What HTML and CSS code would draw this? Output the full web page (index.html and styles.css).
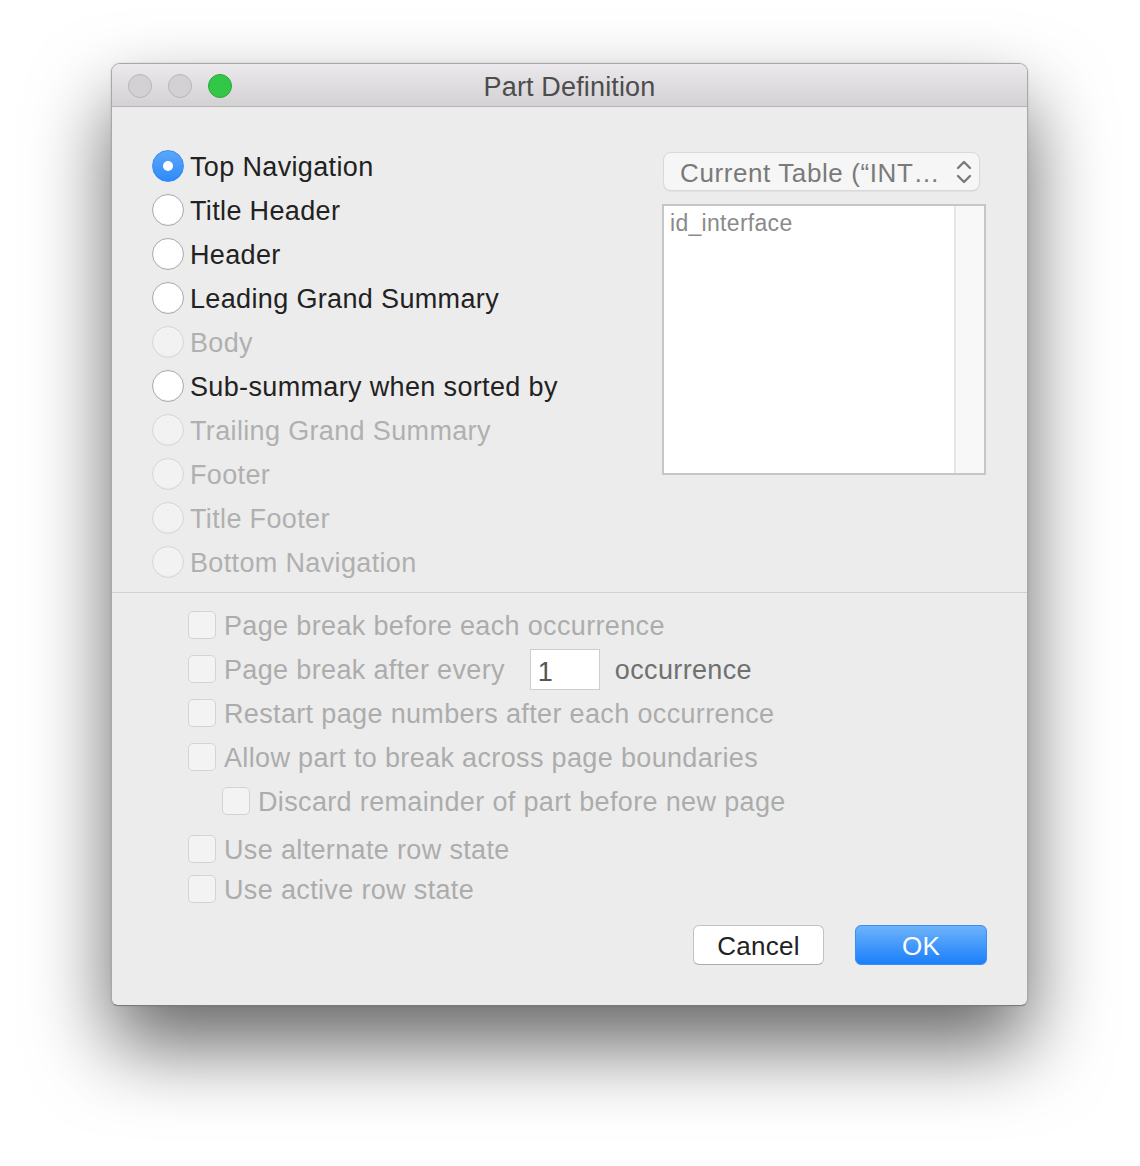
FILE: index.html
```html
<!DOCTYPE html>
<html>
<head>
<meta charset="utf-8">
<title>Part Definition</title>
<link rel="stylesheet" href="styles.css">
</head>
<body>
<div class="window">
  <div class="titlebar">
    <div class="lights">
      <span class="light"></span>
      <span class="light"></span>
      <span class="light green"></span>
    </div>
    <div class="title">Part Definition</div>
  </div>
  <div class="top">
    <ul class="radios">
      <li class="radio checked"><span class="rb"></span>Top Navigation</li>
      <li class="radio"><span class="rb"></span>Title Header</li>
      <li class="radio"><span class="rb"></span>Header</li>
      <li class="radio"><span class="rb"></span>Leading Grand Summary</li>
      <li class="radio disabled"><span class="rb"></span>Body</li>
      <li class="radio"><span class="rb"></span>Sub-summary when sorted by</li>
      <li class="radio disabled"><span class="rb"></span>Trailing Grand Summary</li>
      <li class="radio disabled"><span class="rb"></span>Footer</li>
      <li class="radio disabled"><span class="rb"></span>Title Footer</li>
      <li class="radio disabled"><span class="rb"></span>Bottom Navigation</li>
    </ul>
    <div class="side">
      <div class="popup">
        <span class="popup-text">Current Table (“INT…</span>
        <svg class="chev" width="16" height="24" viewBox="0 0 16 24"><path d="M2 8 L8 2 L14 8 M2 16 L8 22 L14 16" fill="none" stroke="#7a7a7a" stroke-width="2.4" stroke-linecap="round" stroke-linejoin="round"/></svg>
      </div>
      <div class="list">
        <div class="items"><div class="item">id_interface</div></div>
        <div class="scroll"></div>
      </div>
    </div>
  </div>
  <div class="sep"></div>
  <div class="checks">
    <div class="group">
      <div class="check"><span class="cb"></span>Page break before each occurrence</div>
      <div class="check"><span class="cb"></span>Page break after every<span class="field">1</span><span class="occ">occurrence</span></div>
      <div class="check"><span class="cb"></span>Restart page numbers after each occurrence</div>
      <div class="check"><span class="cb"></span>Allow part to break across page boundaries</div>
      <div class="check indent"><span class="cb"></span>Discard remainder of part before new page</div>
    </div>
    <div class="group tight">
      <div class="check"><span class="cb"></span>Use alternate row state</div>
      <div class="check"><span class="cb"></span>Use active row state</div>
    </div>
  </div>
  <div class="buttons">
    <div class="btn cancel">Cancel</div>
    <div class="btn ok">OK</div>
  </div>
</div>
</body>
</html>
```

FILE: styles.css
```css
* { box-sizing: border-box; }
html, body {
  margin: 0;
  padding: 0;
  background: #ffffff;
}
body {
  font-family: "Liberation Sans", Arial, sans-serif;
  width: 1140px;
  height: 1166px;
  overflow: hidden;
  padding-top: 63px;
  padding-left: 111px;
}
.window {
  width: 917px;
  height: 943px;
  background: #ececec;
  border: 1px solid #a8a8a8;
  border-bottom-color: #7a7a7a;
  border-radius: 9px 9px 7px 7px;
  box-shadow: 0 40px 80px rgba(0,0,0,0.6), 0 0 2px rgba(0,0,0,0.15);
  overflow: hidden;
  display: flex;
  flex-direction: column;
}
.titlebar {
  height: 43px;
  flex: none;
  position: relative;
  background: linear-gradient(#ebe9eb, #d3d1d3);
  border-bottom: 1px solid #b5b5b5;
  display: flex;
  align-items: center;
  justify-content: center;
}
.lights {
  position: absolute;
  left: 16px;
  top: 10px;
  display: flex;
  gap: 16px;
}
.light {
  width: 24px;
  height: 24px;
  border-radius: 50%;
  background: #d3d1d3;
  border: 1px solid #b8b6b8;
}
.light.green {
  background: #33c748;
  border-color: #2aa83c;
}
.title {
  font-size: 27px;
  color: #4d4d4d;
  line-height: 1;
  padding-top: 4px;
  letter-spacing: 0.15px;
}
.top {
  display: flex;
  justify-content: space-between;
  padding: 37px 41px 0 40px;
}
.radios {
  list-style: none;
  margin: 0;
  padding: 0;
}
.radio {
  height: 44px;
  display: flex;
  align-items: center;
  font-size: 27px;
  letter-spacing: 0.35px;
  color: #222222;
  padding-top: 2px;
}
.rb {
  width: 32px;
  height: 32px;
  border-radius: 50%;
  background: #ffffff;
  border: 1px solid #a9a9a9;
  box-shadow: inset 0 -1px 1px rgba(0,0,0,0.04);
  margin-right: 6px;
  margin-top: -2px;
  flex: none;
  display: flex;
  align-items: center;
  justify-content: center;
}
.radio.checked .rb {
  background: linear-gradient(#5aa6fb, #2f8af8);
  border-color: #3b8ef2;
}
.radio.checked .rb::after {
  content: "";
  width: 10px;
  height: 10px;
  border-radius: 50%;
  background: #ffffff;
}
.radio.disabled {
  color: #b0b0b0;
}
.radio.disabled .rb {
  background: #f2f2f2;
  border-color: #d6d6d6;
}
.side {
  width: 324px;
  margin-top: 8px;
  display: flex;
  flex-direction: column;
  align-items: flex-start;
}
.popup {
  width: 317px;
  height: 39px;
  margin-left: 1px;
  background: #f6f6f6;
  border: 1px solid #d9d9d9;
  border-radius: 8px;
  box-shadow: 0 1px 1px rgba(0,0,0,0.05);
  display: flex;
  align-items: center;
  justify-content: space-between;
  padding: 2px 7px 0 16px;
}
.popup-text {
  font-size: 26px;
  color: #7a7a7a;
  line-height: 1;
  letter-spacing: 0.6px;
}
.chev {
  display: block;
  margin-top: -2px;
}
.list {
  margin-top: 13px;
  width: 324px;
  height: 271px;
  border: 2px solid #c6c6c6;
  background: #ffffff;
  display: flex;
}
.items {
  flex: 1;
  padding: 4px 6px;
}
.item {
  font-size: 23px;
  color: #8a8a8a;
  line-height: 26px;
  letter-spacing: 0.3px;
}
.scroll {
  width: 30px;
  background: #f8f8f8;
  border-left: 2px solid #e6e6e6;
}
.sep {
  margin-top: 8px;
  height: 1px;
  flex: none;
  background: #d0d0d0;
}
.checks {
  padding: 12px 0 0 76px;
  display: flex;
  flex-direction: column;
  gap: 8px;
}
.group {
  display: flex;
  flex-direction: column;
  gap: 4px;
}
.group.tight {
  gap: 0;
}
.check {
  height: 40px;
  display: flex;
  align-items: center;
  font-size: 27px;
  letter-spacing: 0.35px;
  color: #acacac;
  padding-top: 2px;
}
.check.indent {
  padding-left: 34px;
}
.cb {
  width: 28px;
  height: 28px;
  border-radius: 5px;
  background: #f3f3f3;
  border: 1px solid #d4d4d4;
  margin-right: 8px;
  margin-top: -2px;
  flex: none;
}
.field {
  width: 70px;
  height: 41px;
  margin-left: 25px;
  margin-top: -2px;
  background: #ffffff;
  border: 1px solid #cdcdcd;
  color: #555555;
  font-size: 27px;
  display: flex;
  align-items: center;
  padding: 6px 0 0 7px;
}
.occ {
  margin-left: 15px;
  color: #707070;
}
.buttons {
  display: flex;
  justify-content: flex-end;
  gap: 31px;
  padding: 16px 40px 0 0;
}
.btn {
  height: 40px;
  display: flex;
  align-items: center;
  justify-content: center;
  font-size: 26px;
  border-radius: 6px;
  letter-spacing: 0.3px;
  padding-top: 2px;
}
.btn.cancel {
  width: 131px;
  background: #ffffff;
  border: 1px solid #c2c2c2;
  border-bottom-color: #acacac;
  color: #222222;
}
.btn.ok {
  width: 132px;
  background: linear-gradient(#6db3fa, #1b7ffb);
  border: 1px solid #3c8ef5;
  color: #ffffff;
}
```
